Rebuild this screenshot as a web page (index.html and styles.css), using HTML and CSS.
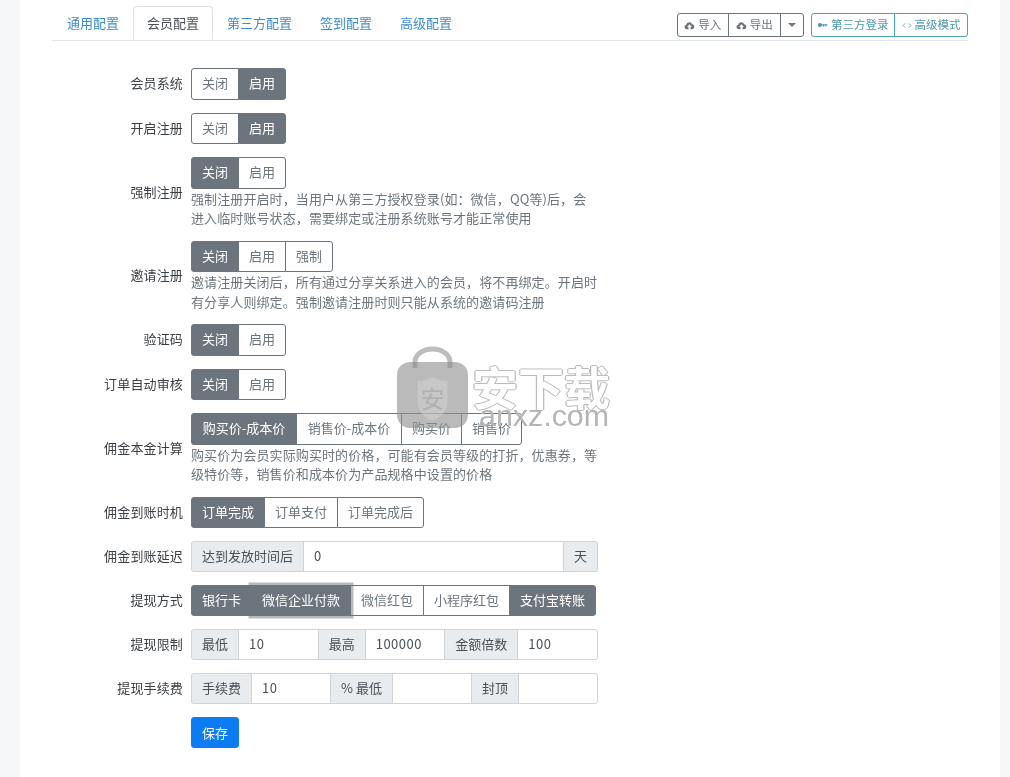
FILE: index.html
```html
<!DOCTYPE html>
<html lang="zh-CN">
<head>
  <meta charset="UTF-8">
  <title>会员配置</title>
  <link rel="stylesheet" href="styles.css">
</head>
<body>
  <div class="card">
    <div class="tabs">
      <a class="tab">通用配置</a>
      <a class="tab active">会员配置</a>
      <a class="tab">第三方配置</a>
      <a class="tab">签到配置</a>
      <a class="tab">高级配置</a>
      <div class="tools">
        <div class="mini-group">
          <button class="mini">
            <svg class="ico" viewBox="0 0 16 12"><path d="M4 11.5a3.3 3.3 0 0 1-.8-6.5A4.6 4.6 0 0 1 12 4.2a3.7 3.7 0 0 1 0 7.3h-2.5V8h2L8 4.2 4.500 8h2v3.500z"/></svg>导入
          </button>
          <button class="mini">
            <svg class="ico" viewBox="0 0 16 12"><path d="M4 11.5a3.3 3.3 0 0 1-.8-6.5A4.6 4.6 0 0 1 12 4.2a3.7 3.7 0 0 1 0 7.3h-2.5V8h2L8 4.2 4.500 8h2v3.500z"/></svg>导出
          </button>
          <button class="mini caret-btn"><span class="caret"></span></button>
        </div>
        <div class="mini-group info">
          <button class="mini">
            <svg class="ico key" viewBox="0 0 14 8"><circle cx="3.500" cy="4" r="2.800"/><path d="M5 3h8.500v1.500H12V6h-1.500V4.500H9V6H7.500V4.500H5z"/></svg>第三方登录
          </button>
          <button class="mini">
            <svg class="ico code" viewBox="0 0 14 8"><path d="M4.500 1 1.500 4l3 3M9.500 1l3 3-3 3"/></svg>高级模式
          </button>
        </div>
      </div>
    </div>

    <form class="config">
      <div class="row">
        <label class="row-label">会员系统</label>
        <div class="row-body">
          <div class="btn-group">
            <button type="button" class="btn">关闭</button>
            <button type="button" class="btn on">启用</button>
          </div>
        </div>
      </div>

      <div class="row">
        <label class="row-label">开启注册</label>
        <div class="row-body">
          <div class="btn-group">
            <button type="button" class="btn">关闭</button>
            <button type="button" class="btn on">启用</button>
          </div>
        </div>
      </div>

      <div class="row">
        <label class="row-label">强制注册</label>
        <div class="row-body">
          <div class="btn-group">
            <button type="button" class="btn on">关闭</button>
            <button type="button" class="btn">启用</button>
          </div>
          <p class="help">强制注册开启时，当用户从第三方授权登录(如：微信，QQ等)后，会进入临时账号状态，需要绑定或注册系统账号才能正常使用</p>
        </div>
      </div>

      <div class="row">
        <label class="row-label">邀请注册</label>
        <div class="row-body">
          <div class="btn-group">
            <button type="button" class="btn on">关闭</button>
            <button type="button" class="btn">启用</button>
            <button type="button" class="btn">强制</button>
          </div>
          <p class="help">邀请注册关闭后，所有通过分享关系进入的会员，将不再绑定。开启时有分享人则绑定。强制邀请注册时则只能从系统的邀请码注册</p>
        </div>
      </div>

      <div class="row">
        <label class="row-label">验证码</label>
        <div class="row-body">
          <div class="btn-group">
            <button type="button" class="btn on">关闭</button>
            <button type="button" class="btn">启用</button>
          </div>
        </div>
      </div>

      <div class="row">
        <label class="row-label">订单自动审核</label>
        <div class="row-body">
          <div class="btn-group">
            <button type="button" class="btn on">关闭</button>
            <button type="button" class="btn">启用</button>
          </div>
        </div>
      </div>

      <div class="row">
        <label class="row-label">佣金本金计算</label>
        <div class="row-body">
          <div class="btn-group">
            <button type="button" class="btn on wide">购买价-成本价</button>
            <button type="button" class="btn wide">销售价-成本价</button>
            <button type="button" class="btn">购买价</button>
            <button type="button" class="btn">销售价</button>
          </div>
          <p class="help">购买价为会员实际购买时的价格，可能有会员等级的打折，优惠券，等级特价等，销售价和成本价为产品规格中设置的价格</p>
        </div>
      </div>

      <div class="row">
        <label class="row-label">佣金到账时机</label>
        <div class="row-body">
          <div class="btn-group">
            <button type="button" class="btn on">订单完成</button>
            <button type="button" class="btn">订单支付</button>
            <button type="button" class="btn">订单完成后</button>
          </div>
        </div>
      </div>

      <div class="row">
        <label class="row-label">佣金到账延迟</label>
        <div class="row-body">
          <div class="input-group">
            <span class="addon">达到发放时间后</span>
            <input class="field" type="text" value="0">
            <span class="addon">天</span>
          </div>
        </div>
      </div>

      <div class="row">
        <label class="row-label">提现方式</label>
        <div class="row-body">
          <div class="btn-group">
            <button type="button" class="btn on">银行卡</button>
            <button type="button" class="btn on focus">微信企业付款</button>
            <button type="button" class="btn">微信红包</button>
            <button type="button" class="btn">小程序红包</button>
            <button type="button" class="btn on">支付宝转账</button>
          </div>
        </div>
      </div>

      <div class="row">
        <label class="row-label">提现限制</label>
        <div class="row-body">
          <div class="input-group">
            <span class="addon">最低</span>
            <input class="field" type="text" value="10">
            <span class="addon">最高</span>
            <input class="field" type="text" value="100000">
            <span class="addon">金额倍数</span>
            <input class="field" type="text" value="100">
          </div>
        </div>
      </div>

      <div class="row">
        <label class="row-label">提现手续费</label>
        <div class="row-body">
          <div class="input-group">
            <span class="addon">手续费</span>
            <input class="field" type="text" value="10">
            <span class="addon">% 最低</span>
            <input class="field" type="text">
            <span class="addon">封顶</span>
            <input class="field" type="text">
          </div>
        </div>
      </div>

      <div class="row">
        <span class="row-label"></span>
        <div class="row-body">
          <button type="button" class="save">保存</button>
        </div>
      </div>
    </form>
  </div>

  <div class="watermark">
    <svg class="bag" viewBox="0 0 71 82">
      <path class="bag-handle" d="M18 22v-6a17.500 13 0 0 1 35 0v6"/>
      <rect class="bag-body" x="0" y="16" width="71" height="66" rx="13"/>
      <path class="bag-shield" d="M35.500 31c6 3 10 4 15 4v20c0 11-7 16-15 20-8-4-15-9-15-20V35c5 0 9-1 15-4z"/>
    </svg>
    <span class="bag-mark">安</span>
    <div class="mark-text">
      <div class="mark-cn">安下载</div>
      <div class="mark-en">anxz.com</div>
    </div>
  </div>
</body>
</html>
```

FILE: styles.css
```css
* {
  box-sizing: border-box;
}

body {
  margin: 0;
  min-height: 777px;
  background: #f6f7f9;
  color: #212529;
  font-family: "Noto Sans CJK SC", "Noto Sans", sans-serif;
  font-size: 13px;
  line-height: 1.5;
  position: relative;
  filter: blur(.35px);
}

.card {
  width: 980px;
  margin-left: 20px;
  min-height: 777px;
  background: #fff;
  padding: 6.500px 32px 0;
}

/* tabs */
.tabs {
  display: flex;
  align-items: flex-end;
  height: 34px;
  padding-left: 1px;
  border-bottom: 1px solid #e4e7ea;
}

.tab {
  height: 34px;
  padding: 6px 13px;
  border: 1px solid transparent;
  color: #3d8bcd;
}

.tab.active {
  color: #495057;
  background: #fff;
  border-color: #dee2e6 #dee2e6 #fff;
  border-radius: 4px 4px 0 0;
}

.tools {
  margin-left: auto;
  display: flex;
  gap: 6.500px;
  align-self: flex-start;
  margin-top: 6.500px;
}

.mini-group {
  display: flex;
  color: #6c757d;
}

.mini {
  height: 24px;
  padding: 0 6.750px;
  margin-left: -1px;
  display: flex;
  align-items: center;
  gap: 3px;
  background: #fff;
  border: 1px solid #6c757d;
  color: #6c757d;
  font: inherit;
  font-size: 11.500px;
}

.mini:first-child {
  margin-left: 0;
  border-radius: 3px 0 0 3px;
}

.mini:last-child {
  border-radius: 0 3px 3px 0;
}

.info .mini {
  padding: 0 6.500px;
  border-color: #4aa3b2;
  color: #4d9aa8;
}

.info .mini:first-child {
  padding: 0 5.500px;
}

.ico {
  width: 11px;
  height: 9px;
  fill: currentColor;
}

.key {
  height: 6px;
  width: 11px;
}

.code {
  height: 7px;
  width: 10px;
  fill: none;
  stroke: currentColor;
  stroke-width: 1.200;
}

.mini.caret-btn {
  width: 24.500px;
  justify-content: center;
  padding: 0;
}

.caret {
  border-top: 4px solid #6c757d;
  border-left: 4px solid transparent;
  border-right: 4px solid transparent;
}

/* form */
.config {
  width: 546px;
  padding-top: 27.500px;
}

.row {
  display: flex;
  align-items: center;
  gap: 8px;
  margin-bottom: 13px;
}

.row-label {
  flex: 0 0 131px;
  padding-bottom: 2px;
  text-align: right;
  color: #3a3f44;
  letter-spacing: .15px;
}

.row-body {
  flex: 1;
  min-width: 0;
}

.btn-group {
  display: inline-flex;
  vertical-align: top;
}

.btn {
  height: 31.500px;
  padding: 4px 10px 6px;
  margin-left: -1px;
  background: #fff;
  border: 1px solid #6c757d;
  color: #6c757d;
  font: inherit;
  white-space: nowrap;
}

.btn:first-child {
  margin-left: 0;
  border-radius: 3px 0 0 3px;
}

.btn:last-child {
  border-radius: 0 3px 3px 0;
}

.btn.on {
  background: #6c757d;
  color: #fff;
}

.btn.wide {
  min-width: 106px;
}

.btn.focus {
  position: relative;
  box-shadow: 0 0 0 2.500px rgba(108, 117, 125, .5);
}

.help {
  margin: 0;
  color: #6c757d;
  letter-spacing: .1px;
}

.input-group {
  display: flex;
  height: 30.750px;
}

.addon {
  padding: 4px 10px 6px;
  background: #e9ecef;
  border: 1px solid #ced4da;
  color: #495057;
  white-space: nowrap;
  margin-left: -1px;
}

.addon:first-child {
  margin-left: 0;
  border-radius: 3px 0 0 3px;
}

.addon:last-child {
  border-radius: 0 3px 3px 0;
}

.field {
  flex: 1;
  width: 0;
  min-width: 0;
  padding: 4px 10px 6px;
  margin-left: -1px;
  border: 1px solid #ced4da;
  color: #495057;
  font: inherit;
  letter-spacing: .5px;
}

.field:last-child {
  border-radius: 0 3px 3px 0;
}

.save {
  height: 31.500px;
  padding: 5px 10px;
  background: #0d7bf2;
  border: 1px solid #0d7bf2;
  border-radius: 3px;
  color: #fff;
  font: inherit;
}

/* watermark sits over the form */
.watermark {
  position: absolute;
  left: 397px;
  top: 346px;
  display: flex;
  gap: 4px;
  pointer-events: none;
}

.bag {
  width: 71px;
  height: 82px;
}

.bag-handle {
  fill: none;
  stroke: #bdbdbd;
  stroke-width: 5;
}

.bag-body {
  fill: #8f8f8f;
  fill-opacity: .62;
}

.bag-shield {
  fill: #d6d6d6;
  fill-opacity: .45;
}

.bag-mark {
  position: absolute;
  left: 22px;
  top: 38px;
  width: 27px;
  text-align: center;
  font-size: 24px;
  line-height: 1.200;
  color: #b0b0b0;
}

.mark-text {
  width: 140px;
}

.mark-cn {
  margin-top: 19.500px;
  font-size: 46px;
  line-height: 38px;
  font-weight: 700;
  color: #fff;
  -webkit-text-stroke: 4px #fff;
  paint-order: stroke fill;
  text-shadow: 1.200px 0 #bbb, -1.200px 0 #bbb, 0 1.200px #bbb, 0 -1.200px #bbb;
  white-space: nowrap;
}

.mark-en {
  margin-top: 3px;
  margin-left: 7px;
  font-family: "Liberation Sans", sans-serif;
  font-size: 30.400px;
  line-height: 16px;
  color: #b5b5b5;
}
```
